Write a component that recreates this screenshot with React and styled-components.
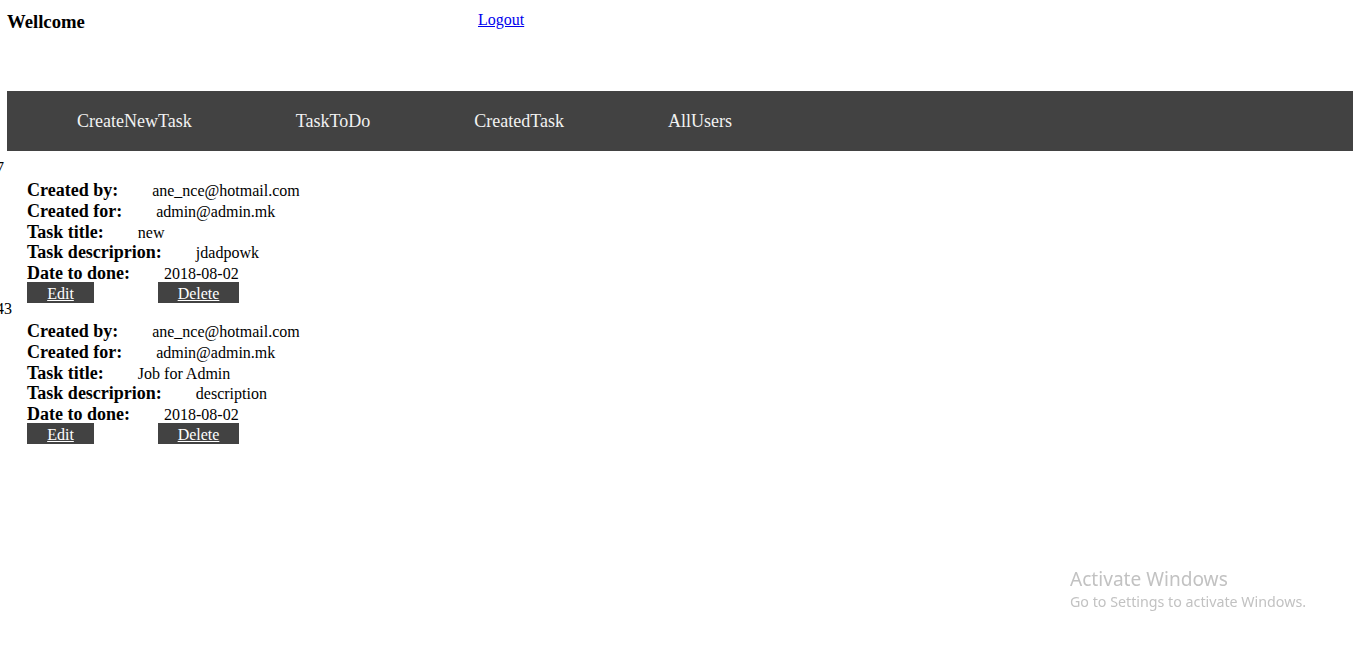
import React from "react";
import styled, { createGlobalStyle } from "styled-components";

const Global = createGlobalStyle`
  html, body { margin: 0; padding: 0; background: #fff; }
  body { font-family: "Liberation Serif", "Times New Roman", serif; font-size: 16px; color: #000; }
`;

const Page = styled.div`
  padding: 11px 10px 40px 7px;
`;

const Header = styled.header`
  display: grid;
  grid-template-columns: 471px auto;
  align-items: start;
  height: 80px;
`;

const Title = styled.h3`
  margin: 0;
  font-size: 18.72px;
  font-weight: bold;
  line-height: 22px;
`;

const LogoutLink = styled.a`
  color: #0000ee;
  text-decoration: underline;
  font-size: 16px;
  line-height: 18px;
`;

const Nav = styled.nav`
  display: flex;
  align-items: center;
  height: 60px;
  box-sizing: border-box;
  padding: 1.5px 0 0 18px;
  background: #424242;
`;

const NavItem = styled.a`
  color: #f2f2f2;
  font-size: 18px;
  text-decoration: none;
  padding: 0 52px;
`;

const List = styled.div`
  padding-top: 8px;
  margin-left: -7px;
`;

const Card = styled.section`
  display: flex;
  flex-direction: column;
  & + & {
    margin-top: -2.75px;
  }
`;

const Num = styled.div`
  line-height: 18px;
  margin-left: -4px;
  margin-bottom: 3px;
`;

const Fields = styled.div`
  padding-left: 27px;
`;

const Row = styled.div`
  display: flex;
  align-items: baseline;
  gap: 34px;
  height: 20.75px;
  line-height: 20.75px;
`;

const Label = styled.span`
  font-weight: bold;
  font-size: 18px;
`;

const Value = styled.span`
  font-size: 16px;
`;

const Actions = styled.div`
  display: flex;
  gap: 64px;
  margin-top: -2px;
`;

const ActionButton = styled.a`
  background: #424242;
  color: #fff;
  text-decoration: underline;
  padding: 3px 0 0;
  font-size: 16px;
  line-height: 18px;
  width: ${(p) => p.$w}px;
  text-align: center;
`;

const Watermark = styled.div`
  position: fixed;
  left: 1070px;
  top: 566px;
  font-family: "Noto Sans", "Open Sans", sans-serif;
  color: #c2c2c2;
  pointer-events: none;
`;

const WmTitle = styled.div`
  font-size: 19.1px;
  line-height: 26px;
`;

const WmSub = styled.div`
  font-size: 14.25px;
  line-height: 19px;
`;

const tasks = [
  {
    id: "7",
    by: "ane_nce@hotmail.com",
    for: "admin@admin.mk",
    title: "new",
    desc: "jdadpowk",
    date: "2018-08-02",
  },
  {
    id: "43",
    by: "ane_nce@hotmail.com",
    for: "admin@admin.mk",
    title: "Job for Admin",
    desc: "description",
    date: "2018-08-02",
  },
];

export default function App() {
  return (
    <>
      <Global />
      <Page>
        <Header>
          <Title>Wellcome</Title>
          <LogoutLink href="#">Logout</LogoutLink>
        </Header>
        <Nav>
          <NavItem href="#">CreateNewTask</NavItem>
          <NavItem href="#">TaskToDo</NavItem>
          <NavItem href="#">CreatedTask</NavItem>
          <NavItem href="#">AllUsers</NavItem>
        </Nav>
        <List>
          {tasks.map((t) => (
            <Card key={t.id}>
              <Num>{t.id}</Num>
              <Fields>
                <Row>
                  <Label>Created by:</Label>
                  <Value>{t.by}</Value>
                </Row>
                <Row>
                  <Label>Created for:</Label>
                  <Value>{t.for}</Value>
                </Row>
                <Row>
                  <Label>Task title:</Label>
                  <Value>{t.title}</Value>
                </Row>
                <Row>
                  <Label>Task descriprion:</Label>
                  <Value>{t.desc}</Value>
                </Row>
                <Row>
                  <Label>Date to done:</Label>
                  <Value>{t.date}</Value>
                </Row>
                <Actions>
                  <ActionButton href="#" $w={67}>Edit</ActionButton>
                  <ActionButton href="#" $w={81}>Delete</ActionButton>
                </Actions>
              </Fields>
            </Card>
          ))}
        </List>
      </Page>
      <Watermark>
        <WmTitle>Activate Windows</WmTitle>
        <WmSub>Go to Settings to activate Windows.</WmSub>
      </Watermark>
    </>
  );
}
